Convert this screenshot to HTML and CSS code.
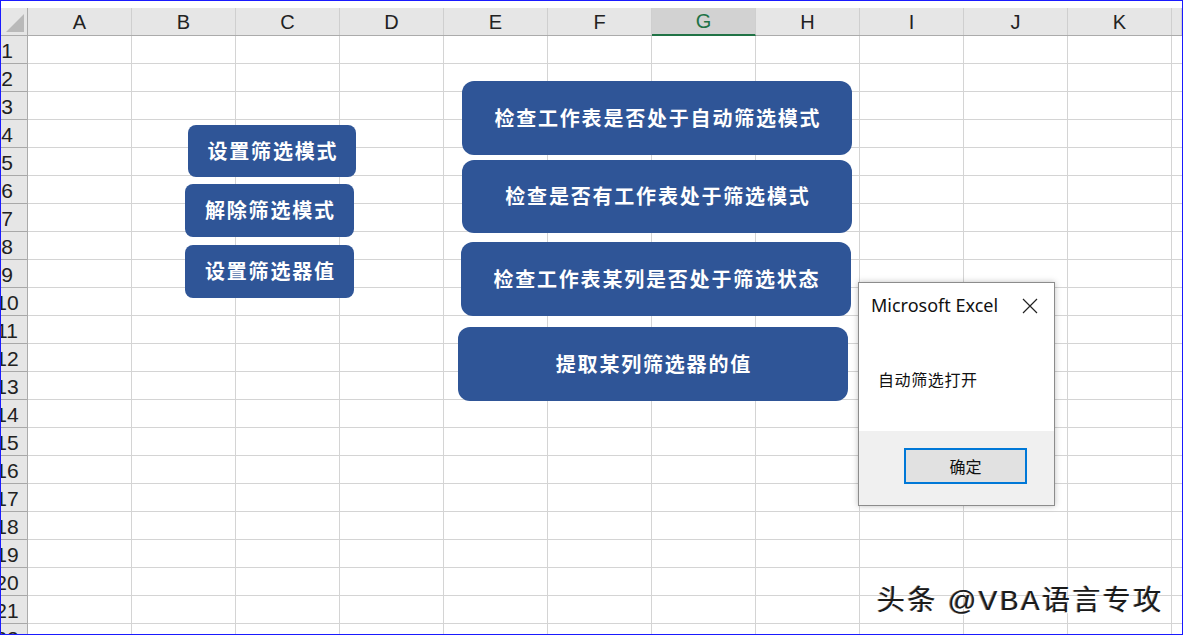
FILE: index.html
```html
<!DOCTYPE html>
<html>
  <head>
    <title>Excel - 筛选模式</title>
    <link rel="stylesheet" href="styles.css">
  </head>
  <body>
    <div class="frame">
      <div class="top-gap"></div>
      <div class="col-head">
        <div class="corner"><span class="corner-tri"></span></div>
        <div class="col">A</div>
        <div class="col">B</div>
        <div class="col">C</div>
        <div class="col">D</div>
        <div class="col">E</div>
        <div class="col">F</div>
        <div class="col col-active">G</div>
        <div class="col">H</div>
        <div class="col">I</div>
        <div class="col">J</div>
        <div class="col">K</div>
        <div class="col col-rest"></div>
      </div>
      <div class="sheet">
        <div class="row-head">
          <div class="rn"><span>1</span></div>
          <div class="rn"><span>2</span></div>
          <div class="rn"><span>3</span></div>
          <div class="rn"><span>4</span></div>
          <div class="rn"><span>5</span></div>
          <div class="rn"><span>6</span></div>
          <div class="rn"><span>7</span></div>
          <div class="rn"><span>8</span></div>
          <div class="rn"><span>9</span></div>
          <div class="rn"><span>10</span></div>
          <div class="rn"><span>11</span></div>
          <div class="rn"><span>12</span></div>
          <div class="rn"><span>13</span></div>
          <div class="rn"><span>14</span></div>
          <div class="rn"><span>15</span></div>
          <div class="rn"><span>16</span></div>
          <div class="rn"><span>17</span></div>
          <div class="rn"><span>18</span></div>
          <div class="rn"><span>19</span></div>
          <div class="rn"><span>20</span></div>
          <div class="rn"><span>21</span></div>
          <div class="rn"><span>22</span></div>
        </div>
        <div class="cells"></div>
      </div>

      <!-- shapes floating on the sheet -->
      <button class="shape shape-set">设置筛选模式</button>
      <button class="shape shape-clear">解除筛选模式</button>
      <button class="shape shape-value">设置筛选器值</button>

      <button class="shape shape-big shape-check">检查工作表是否处于自动筛选模式</button>
      <button class="shape shape-big shape-any">检查是否有工作表处于筛选模式</button>
      <button class="shape shape-big shape-col">检查工作表某列是否处于筛选状态</button>
      <button class="shape shape-big shape-get">提取某列筛选器的值</button>

      <div class="dialog">
        <div class="dlg-body">
          <div class="dlg-title">
            <span>Microsoft Excel</span>
            <svg class="dlg-close" width="16" height="16" viewBox="0 0 16 16">
              <path d="M1 1 L15 15 M15 1 L1 15" stroke="#222" stroke-width="1.2" fill="none" />
            </svg>
          </div>
          <div class="dlg-msg">自动筛选打开</div>
        </div>
        <div class="dlg-foot">
          <button class="dlg-ok">确定</button>
        </div>
      </div>

      <div class="watermark">头条 @VBA语言专攻</div>
    </div>
  </body>
</html>
```

FILE: styles.css
```css
body {
  margin: 0;
  background: #fff;
}
.frame {
  position: relative;
  width: 1183px;
  height: 635px;
  box-sizing: border-box;
  border: 1px solid #1a1aff;
  overflow: hidden;
  display: flex;
  flex-direction: column;
  font-family: "Liberation Sans", "Noto Sans CJK SC", sans-serif;
}
.top-gap {
  height: 7px;
  flex: none;
}
.col-head {
  display: flex;
  height: 28px;
  flex: none;
  background: #e6e6e6;
  border-bottom: 1px solid #ababab;
  box-sizing: border-box;
}
.corner {
  position: relative;
  width: 27px;
  flex: none;
  box-sizing: border-box;
  border-right: 1px solid #ababab;
}
.corner-tri {
  position: absolute;
  right: 3px;
  bottom: 3px;
  width: 0;
  height: 0;
  border-left: 18px solid transparent;
  border-bottom: 18px solid #b9b9b9;
}
.col {
  width: 104px;
  flex: none;
  box-sizing: border-box;
  border-right: 1px solid #cfcfcf;
  text-align: center;
  font-size: 20px;
  line-height: 28px;
  color: #222;
}
.col-active {
  background: #d2d2d2;
  color: #217346;
  border-bottom: 2px solid #217346;
  line-height: 27px;
  height: 28px;
}
.col-rest {
  flex: 1;
  width: auto;
}
.sheet {
  display: flex;
  flex: 1;
  min-height: 0;
}
.row-head {
  width: 27px;
  flex: none;
  background: #e6e6e6;
  border-right: 1px solid #ababab;
  box-sizing: border-box;
}
.rn {
  height: 28px;
  box-sizing: border-box;
  border-bottom: 1px solid #a8a8a8;
  overflow: hidden;
}
.rn span {
  display: block;
  width: 40px;
  margin-left: -14px;
  text-align: center;
  font-size: 21px;
  line-height: 29px;
  color: #222;
}
.cells {
  flex: 1;
  background-color: #fff;
  background-image:
    linear-gradient(to right, transparent 103px, #d4d4d4 103px),
    linear-gradient(to bottom, transparent 27px, #d4d4d4 27px);
  background-size: 104px 28px, 104px 28px;
}

/* offsets are inside the 1px frame border */
.shape {
  position: absolute;
  margin: 0;
  padding: 0 0 2px 0;
  border: none;
  border-radius: 8px;
  background: #2f5597;
  color: #fff;
  font-family: "Noto Sans CJK SC", sans-serif;
  font-weight: bold;
  font-size: 20px;
  letter-spacing: 1.8px;
  text-indent: 1.8px;
}
.shape-set {
  left: 187px;
  top: 124px;
  width: 168px;
  height: 52px;
}
.shape-clear {
  left: 184px;
  top: 183px;
  width: 169px;
  height: 53px;
}
.shape-value {
  left: 184px;
  top: 244px;
  width: 169px;
  height: 53px;
}
.shape-big {
  border-radius: 12px;
  width: 390px;
  height: 74px;
}
.shape-check {
  left: 461px;
  top: 80px;
}
.shape-any {
  left: 461px;
  top: 159px;
  height: 73px;
}
.shape-col {
  left: 460px;
  top: 241px;
}
.shape-get {
  left: 457px;
  top: 326px;
}

.dialog {
  position: absolute;
  left: 857px;
  top: 281px;
  width: 197px;
  height: 224px;
  box-sizing: border-box;
  border: 1px solid #8c8c8c;
  background: #fff;
  box-shadow: 0 0 6px rgba(0, 0, 0, 0.25);
  display: flex;
  flex-direction: column;
}
.dlg-body {
  flex: 1;
  display: flex;
  flex-direction: column;
}
.dlg-title {
  height: 44px;
  display: flex;
  align-items: center;
  justify-content: space-between;
  padding: 0 16px 0 12px;
  font-family: "Noto Sans", "Open Sans", sans-serif;
  font-size: 18px;
  color: #111;
}
.dlg-close {
  margin-top: 1px;
}
.dlg-msg {
  margin-top: 42px;
  padding-left: 19px;
  font-family: "Noto Sans CJK SC", sans-serif;
  font-size: 16px;
  line-height: 20px;
  letter-spacing: 0.6px;
  color: #111;
}
.dlg-foot {
  height: 74px;
  flex: none;
  background: #f0f0f0;
  display: flex;
  justify-content: flex-end;
  align-items: flex-start;
  padding: 17px 27px 0 0;
  box-sizing: border-box;
}
.dlg-ok {
  width: 123px;
  height: 36px;
  margin: 0;
  border: 2px solid #0078d7;
  background: #e1e1e1;
  font-family: "Noto Sans CJK SC", sans-serif;
  font-size: 16px;
  color: #111;
}

.watermark {
  position: absolute;
  left: 876px;
  top: 582px;
  font-family: "Liberation Sans", "Noto Sans CJK SC", sans-serif;
  font-size: 28px;
  line-height: 36px;
  letter-spacing: 2.4px;
  color: #1a1a1a;
  text-shadow: 1px 1px 0 #fff, -1px 0 0 #888;
}
```
